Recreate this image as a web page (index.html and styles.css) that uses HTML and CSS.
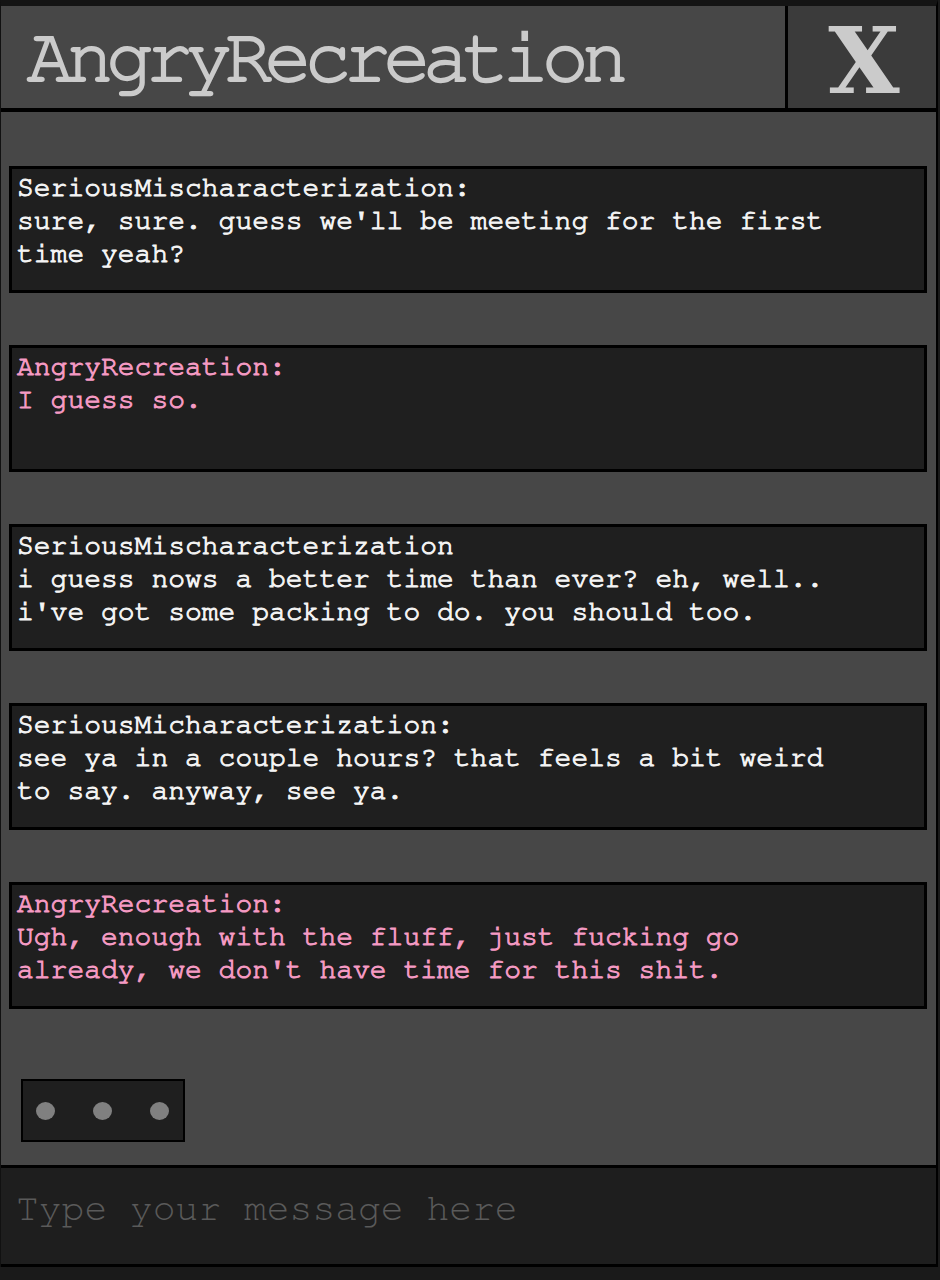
FILE: index.html
```html
<!DOCTYPE html>
<html lang="en">
<head>
    <meta charset="UTF-8">
    <meta name="viewport" content="width=device-width, initial-scale=1.0">
    <title>AngryRecreation - Chat</title>
    <link rel="stylesheet" href="styles.css">
</head>
<body>
    <div class="window">
        <!-- header -->
        <div class="chat-header">
            <h1 class="chat-title">AngryRecreation</h1>
            <button class="close-btn">X</button>
        </div>

        <!-- messages -->
        <div class="chat-body">
            <div class="message">
                <div class="sender">SeriousMischaracterization:</div>
                <div class="text">sure, sure. guess we'll be meeting for the first time yeah?</div>
            </div>

            <div class="message angry">
                <div class="sender">AngryRecreation:</div>
                <div class="text">I guess so.</div>
            </div>

            <div class="message">
                <div class="sender">SeriousMischaracterization</div>
                <div class="text">i guess nows a better time than ever? eh, well.. i've got some packing to do. you should too.</div>
            </div>

            <div class="message">
                <div class="sender">SeriousMicharacterization:</div>
                <div class="text">see ya in a couple hours? that feels a bit weird to say. anyway, see ya.</div>
            </div>

            <div class="message angry">
                <div class="sender">AngryRecreation:</div>
                <div class="text">Ugh, enough with the fluff, just fucking go already, we don't have time for this shit.</div>
            </div>

            <!-- typing indicator -->
            <div class="typing">
                <span class="dot"></span>
                <span class="dot"></span>
                <span class="dot"></span>
            </div>
        </div>

        <!-- input -->
        <div class="chat-input">
            <input type="text" class="input-box" placeholder="Type your message here">
        </div>
    </div>
</body>
</html>
```

FILE: styles.css
```css
* {
    margin: 0;
    padding: 0;
    box-sizing: border-box;
}

body {
    background-color: #1a1a1a;
    font-family: "Nimbus Mono PS", "FreeMono", "Courier", "Liberation Mono", monospace;
}

.window {
    width: 938px;
    border-top: 6px solid #141414;
    border-left: 1px solid #111;
    border-right: 2px solid #000;
}

/* header */
.chat-header {
    display: flex;
    height: 106px;
    border-bottom: 4px solid #000;
}

.chat-title {
    flex: 1;
    background-color: #474747;
    color: #cbcbcb;
    font-size: 78px;
    font-weight: normal;
    -webkit-text-stroke: 2px #cbcbcb;
    letter-spacing: -7.2px;
    line-height: 104px;
    padding-left: 26px;
    border-right: 3px solid #000;
}

.close-btn {
    width: 148px;
    background-color: #3b3b3b;
    border: none;
    color: #cbcbcb;
    font-family: "DejaVu Serif", serif;
    font-size: 92px;
    font-weight: bold;
    line-height: 1;
    padding: 8px 0 0 4px;
    cursor: pointer;
}

/* messages */
.chat-body {
    height: 1053px;
    background-color: #474747;
    padding: 54px 9px 0 8px;
    display: flex;
    flex-direction: column;
    gap: 52px;
}

.message {
    height: 127px;
    background-color: #1f1f1f;
    border: 3px solid #000;
    padding: 3px 75px 0 5px;
    color: #f4f4f4;
    font-size: 28px;
    font-weight: normal;
    -webkit-text-stroke: 1px #f4f4f4;
    line-height: 33px;
}

.message.angry {
    color: #f59ac3;
    -webkit-text-stroke-color: #f59ac3;
}

.typing {
    width: 164px;
    height: 63px;
    margin: 18px 0 0 12px;
    background-color: #1f1f1f;
    border: 2px solid #000;
    display: flex;
    align-items: center;
    justify-content: space-between;
    padding: 0 14px 0 13px;
}

.dot {
    width: 19px;
    height: 18px;
    border-radius: 50%;
    background-color: #808080;
}

/* input */
.chat-input {
    height: 102px;
    background-color: #1e1e1e;
    border-top: 3px solid #000;
    border-bottom: 3px solid #000;
}

.input-box {
    width: 100%;
    height: 96px;
    background: transparent;
    border: none;
    outline: none;
    padding: 0 0 14px 15px;
    color: #ddd;
    font-family: inherit;
    font-size: 38px;
    font-weight: normal;
}

.input-box::placeholder {
    color: #5a5a5a;
}
```
